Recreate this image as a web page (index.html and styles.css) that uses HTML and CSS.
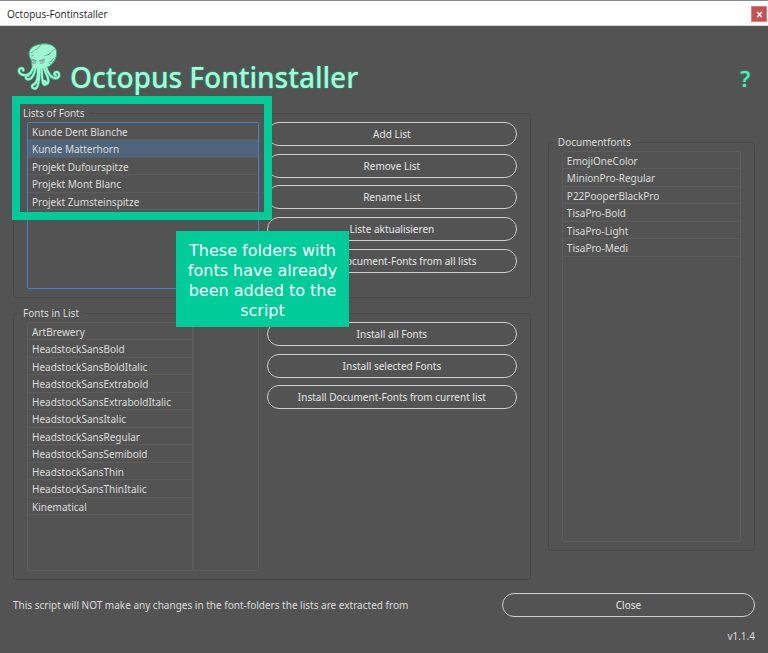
FILE: index.html
```html
<!DOCTYPE html>
<html lang="en">
<head>
<meta charset="utf-8">
<title>Octopus-Fontinstaller</title>
<link rel="stylesheet" href="styles.css">
</head>
<body>
<header class="titlebar">
  <span>Octopus-Fontinstaller</span>
  <button class="titlebar-close" type="button" aria-label="Close window">
    <svg width="7" height="7" viewBox="0 0 7 7"><path d="M1.2 1 5.8 6M5.8 1 1.2 6" stroke="#fff" stroke-width="1.5"/></svg>
  </button>
</header>
<main class="app">
  <div class="brand">
    <svg class="logo" viewBox="18 21 144 150" aria-hidden="true">
      <g fill="none" stroke-linecap="round" stroke-linejoin="round">
        <g stroke="#2fae86" stroke-width="10">
          <path d="M72 92C68 112 57 122 44 121C31 120 24 111 28 103C32 97 42 99 40 107"/>
          <path d="M78 96C76 118 66 133 56 134C45 134 46 119 56 122"/>
          <path d="M85 97C87 125 82 146 70 151"/>
          <path d="M90 96C90 132 88 157 78 162C70 163 64 157 69 152"/>
          <path d="M96 95C97 120 97 144 104 150C112 152 111 139 104 139"/>
          <path d="M103 95C105 112 119 125 117 140C115 151 104 150 100 143"/>
          <path d="M109 91C113 115 128 134 143 130C153 126 152 113 143 111C135 111 133 120 140 122"/>
        </g>
        <path d="M66 83C67 74 57 68 58 54C59 36 76 28 94 26C117 22 140 30 142 48C145 66 133 85 121 93C114 98 109 93 108 102L73 101C70 94 65 91 66 83Z" fill="#9ff7d2" stroke="#2fae86" stroke-width="3"/>
        <g stroke="#9ff7d2" stroke-width="6">
          <path d="M72 92C68 112 57 122 44 121C31 120 24 111 28 103C32 97 42 99 40 107"/>
          <path d="M78 96C76 118 66 133 56 134C45 134 46 119 56 122"/>
          <path d="M85 97C87 125 82 146 70 151"/>
          <path d="M90 96C90 132 88 157 78 162C70 163 64 157 69 152"/>
          <path d="M96 95C97 120 97 144 104 150C112 152 111 139 104 139"/>
          <path d="M103 95C105 112 119 125 117 140C115 151 104 150 100 143"/>
          <path d="M109 91C113 115 128 134 143 130C153 126 152 113 143 111C135 111 133 120 140 122"/>
        </g>
        <g stroke="#2f9b7a" stroke-width="2">
          <path d="M136 42C129 46 123 55 116 60M123 55 106 62"/>
          <path d="M65 52C76 50 71 42 82 42C88 38 84 34 94 30M66 62 72 60"/>
          <path d="M134 68C126 73 130 79 122 80M125 88 119 84M130 82 125 78"/>
          <path d="M66 72 80 76M91 76 106 72"/>
        </g>
        <g fill="#d7f3e7" stroke="#5a927f" stroke-width="2">
          <path d="M67 76 79 78 77 85 69 84Z"/>
          <path d="M92 78 105 76 103 83 94 85Z"/>
        </g>
      </g>
      <circle cx="73" cy="80" r="2" fill="#35685b"/><circle cx="98" cy="80" r="2" fill="#35685b"/>
    </svg>
    <h1 class="title">Octopus Fontinstaller</h1>
    <button class="help" type="button" aria-label="Help">?</button>
  </div>

  <div class="columns">
    <div class="left">
      <fieldset class="group annotated">
        <legend>Lists of Fonts</legend>
        <div class="group-body">
          <ul class="list list-short focused" role="listbox" aria-label="Lists of Fonts">
            <li role="option">Kunde Dent Blanche</li>
            <li role="option" class="selected" aria-selected="true">Kunde Matterhorn</li>
            <li role="option">Projekt Dufourspitze</li>
            <li role="option">Projekt Mont Blanc</li>
            <li role="option">Projekt Zumsteinspitze</li>
          </ul>
          <div class="actions">
            <button class="pill" type="button">Add List</button>
            <button class="pill" type="button">Remove List</button>
            <button class="pill" type="button">Rename List</button>
            <button class="pill" type="button">Liste aktualisieren</button>
            <button class="pill" type="button">Install Document-Fonts from all lists</button>
          </div>
        </div>
        <div class="highlight"></div>
        <p class="callout">These folders with fonts have already been added to the script</p>
      </fieldset>

      <fieldset class="group">
        <legend>Fonts in List</legend>
        <div class="group-body">
          <div class="split">
            <ul class="list list-mid" role="listbox" aria-label="Fonts in List">
              <li role="option">ArtBrewery</li>
              <li role="option">HeadstockSansBold</li>
              <li role="option">HeadstockSansBoldItalic</li>
              <li role="option">HeadstockSansExtrabold</li>
              <li role="option">HeadstockSansExtraboldItalic</li>
              <li role="option">HeadstockSansItalic</li>
              <li role="option">HeadstockSansRegular</li>
              <li role="option">HeadstockSansSemibold</li>
              <li role="option">HeadstockSansThin</li>
              <li role="option">HeadstockSansThinItalic</li>
              <li role="option">Kinematical</li>
            </ul>
            <div class="preview"></div>
          </div>
          <div class="actions">
            <button class="pill" type="button">Install all Fonts</button>
            <button class="pill" type="button">Install selected Fonts</button>
            <button class="pill" type="button">Install Document-Fonts from current list</button>
          </div>
        </div>
      </fieldset>
    </div>

    <fieldset class="group right">
      <legend>Documentfonts</legend>
      <ul class="list list-tall" role="listbox" aria-label="Documentfonts">
        <li role="option">EmojiOneColor</li>
        <li role="option">MinionPro-Regular</li>
        <li role="option">P22PooperBlackPro</li>
        <li role="option">TisaPro-Bold</li>
        <li role="option">TisaPro-Light</li>
        <li role="option">TisaPro-Medi</li>
      </ul>
    </fieldset>
  </div>

  <footer class="footer">
    <p>This script will NOT make any changes in the font-folders the lists are extracted from</p>
    <button class="pill" type="button">Close</button>
  </footer>
  <p class="version">v1.1.4</p>
</main>
</body>
</html>
```
FILE: styles.css
```css
* { box-sizing: border-box; }

body {
  margin: 0;
  min-height: 100vh;
  background: #535353;
  color: #dcdcdc;
  font: 10px/18px "Noto Sans", sans-serif;
}

p, h1, ul { margin: 0; padding: 0; }
button { font: inherit; color: inherit; background: none; border: 0; padding: 0; }

.titlebar {
  display: flex;
  justify-content: space-between;
  align-items: center;
  height: 26px;
  padding: 2px 1px 0 7px;
  border-top: 1px solid #858a96;
  border-bottom: 1px solid #d8d8d8;
  background: #fff;
  color: #1c1c1c;
  font-family: "Open Sans", sans-serif;
}
.titlebar-close {
  display: grid;
  place-items: center;
  width: 16px;
  height: 16px;
  background: #c75050;
  border: 1px solid #d98080;
}

.app { padding: 0 13px; }

.brand {
  display: flex;
  align-items: center;
  height: 78px;
  padding: 4px 5px 0 3px;
}
.logo { width: 47px; height: 50px; flex: none; }
.title, .help {
  color: #a9f9d9;
  text-shadow: 0 0 2px #10b487, 0 0 1px #10b487;
}
.title {
  margin: 20px 0 0 7px;
  font: 500 28px/30px "Noto Sans", sans-serif;
}
.help {
  margin: 22px 0 0 auto;
  font: 500 22px/24px "Noto Sans", sans-serif;
  color: #5fe9b9;
}

.columns { display: grid; grid-template-columns: 5fr 2fr; gap: 17px; }
.left { display: grid; gap: 6px; }

.group {
  position: relative;
  min-width: 0;
  margin: 0;
  padding: 0 13px 8px;
  border: 1px solid #484848;
  border-radius: 3px;
}
.annotated { z-index: 1; }
.group legend { height: 18px; margin-left: -9px; padding: 0 5px; }
.group-body { display: grid; grid-template-columns: 232fr 250fr; gap: 8px; }
.right { align-self: start; margin-top: 29px; }

.list {
  display: grid;
  grid-auto-rows: 17px 18px;
  align-content: start;
  list-style: none;
  border: 1px solid #5d5d5d;
  border-radius: 2px;
}
.list li {
  padding-left: 4px;
  border-bottom: 1px solid #5d5d5d;
  white-space: nowrap;
}
.list .selected { background: #4f657b; }
.focused { border-color: #4684c4; }
.list-short { min-height: 167px; }
.list-mid { min-height: 249px; }
.list-tall { min-height: 391px; }

.split { display: grid; grid-template-columns: 5fr 2fr; }
.preview { border: 1px solid #5d5d5d; border-radius: 2px; }

.actions {
  display: grid;
  grid-auto-rows: 32px 31px 32px;
  align-content: start;
}
.pill {
  height: 24px;
  border: 1px solid #cfcfcf;
  border-radius: 12px;
  color: #e6e6e6;
  white-space: nowrap;
}

/* Tutorial annotation laid over the first group */
.highlight {
  position: absolute;
  top: -26px;
  left: -2px;
  width: 260px;
  height: 124px;
  border: 8px solid #00cc99;
}
.callout {
  position: absolute;
  top: 109px;
  left: 162px;
  width: 173px;
  padding: 10px 8px 6px;
  background: #00cc99;
  color: #fff;
  font: 16px/20px "DejaVu Sans", sans-serif;
  text-align: center;
}

.footer {
  display: grid;
  grid-template-columns: minmax(0, 489fr) 253fr;
  align-items: center;
  margin-top: 13px;
}
.version { margin-top: 10px; text-align: right; }
```
